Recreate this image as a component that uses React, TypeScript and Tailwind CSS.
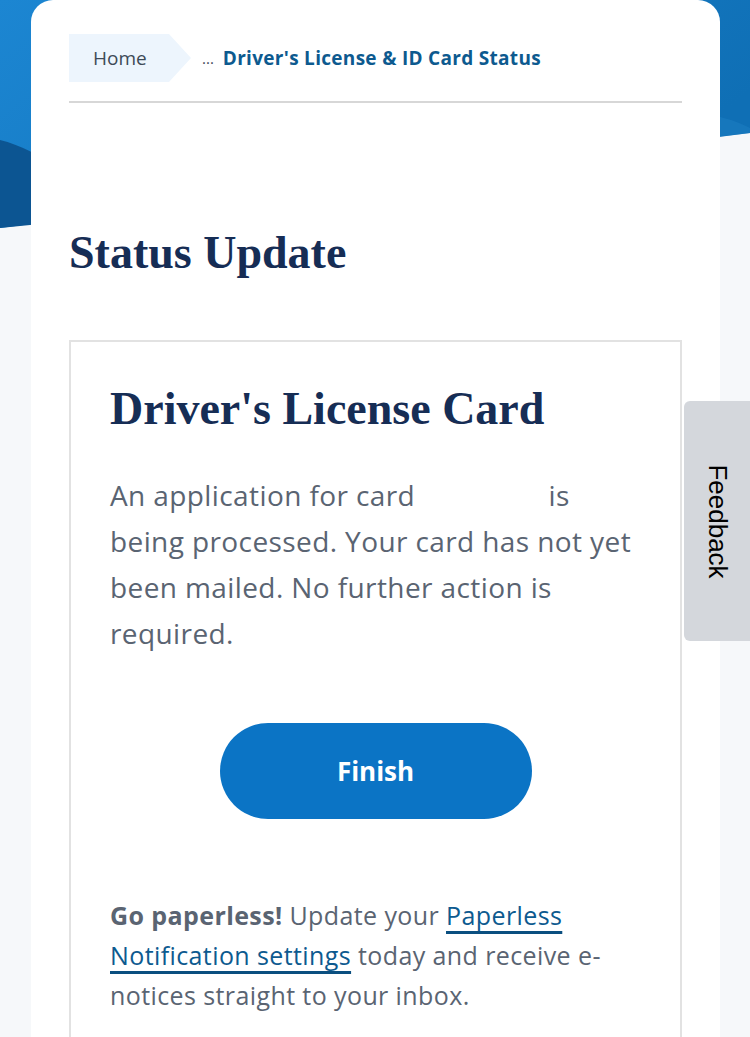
import React from "react";

const sans = "font-['Open_Sans','Lato',sans-serif]";

export default function App() {
  return (
    <div className="relative min-h-[1037px] w-full overflow-hidden bg-[#f6f8fa]">
      {/* Blue hero backdrop */}
      <svg
        className="absolute left-0 top-0 h-[240px] w-[750px]"
        viewBox="0 0 750 240"
        preserveAspectRatio="none"
      >
        <defs>
          <linearGradient id="hero" x1="0" y1="0" x2="1" y2="0.4">
            <stop offset="0" stopColor="#1c86d2" />
            <stop offset="1" stopColor="#0f6fb5" />
          </linearGradient>
        </defs>
        <polygon points="0,0 750,0 750,133 0,228" fill="url(#hero)" />
        <path d="M0,140 C20,145 40,155 60,170 L60,222 L0,228 Z" fill="#0c5592" />
        <path d="M690,110 C715,115 735,120 750,128 L750,133 L690,140 Z" fill="#1a7dc2" opacity="0.6" />
      </svg>

      {/* Main white card */}
      <div className="relative ml-[31px] min-h-[1037px] w-[689px] rounded-t-[22px] bg-white px-[38px] pt-[34px]">
        {/* Breadcrumb */}
        <nav className={`flex h-[48px] items-center ${sans}`}>
          <div className="flex h-[48px] w-[122px] items-center bg-[#edf5fd] pl-[24px] text-[19px] text-[#3d4a57] [clip-path:polygon(0_0,100px_0,122px_50%,100px_100%,0_100%)]">
            Home
          </div>
          <span className="ml-[11px] text-[15px] text-[#3d4a57]">...</span>
          <span className="ml-[9px] text-[19px] font-bold tracking-[0.3px] text-[#0d5a8f]">
            Driver's License &amp; ID Card Status
          </span>
        </nav>
        <div className="mt-[19px] h-[2px] w-full bg-[#d7d7d7]" />

        <h1 className="mt-[127px] font-['Liberation_Serif','Times_New_Roman',serif] text-[46px] font-bold leading-[46px] text-[#162d55]">
          Status Update
        </h1>

        {/* Status box */}
        <div className="mt-[64px] min-h-[720px] border-2 border-[#e2e2e2] px-[39px] pt-[40px]">
          <h2 className="font-['Liberation_Serif','Times_New_Roman',serif] text-[46px] font-bold leading-[54px] text-[#162d55]">
            Driver's License Card
          </h2>
          <p className={`mt-[36px] whitespace-nowrap text-[28px] leading-[46px] tracking-[0.4px] text-[#5a6472] ${sans}`}>
            An application for card <span className="inline-block w-[118px]" /> is
            <br />
            being processed. Your card has not yet
            <br />
            been mailed. No further action is
            <br />
            required.
          </p>

          <div className="mt-[67px] flex justify-center">
            <button
              className={`h-[96px] w-[312px] rounded-full bg-[#0b74c5] text-[26px] font-bold text-white ${sans}`}
            >
              Finish
            </button>
          </div>

          <p className={`mt-[76px] whitespace-nowrap text-[25px] leading-[40px] tracking-[0.4px] text-[#5a6472] ${sans}`}>
            <span className="font-bold">Go paperless!</span> Update your{" "}
            <a className="text-[#0d5a8f] underline decoration-[#0b4f80] decoration-[3px] underline-offset-[6px]">
              Paperless
              <br />
              Notification settings
            </a>{" "}
            today and receive e-
            <br />
            notices straight to your inbox.
          </p>
        </div>
      </div>

      {/* Feedback tab */}
      <div className="absolute right-0 top-[401px] flex h-[240px] w-[66px] items-center justify-center rounded-l-[6px] bg-[#d4d7dc]">
        <span className="rotate-90 whitespace-nowrap font-['Liberation_Sans',Arial,sans-serif] text-[26px] text-black">
          Feedback
        </span>
      </div>
    </div>
  );
}
